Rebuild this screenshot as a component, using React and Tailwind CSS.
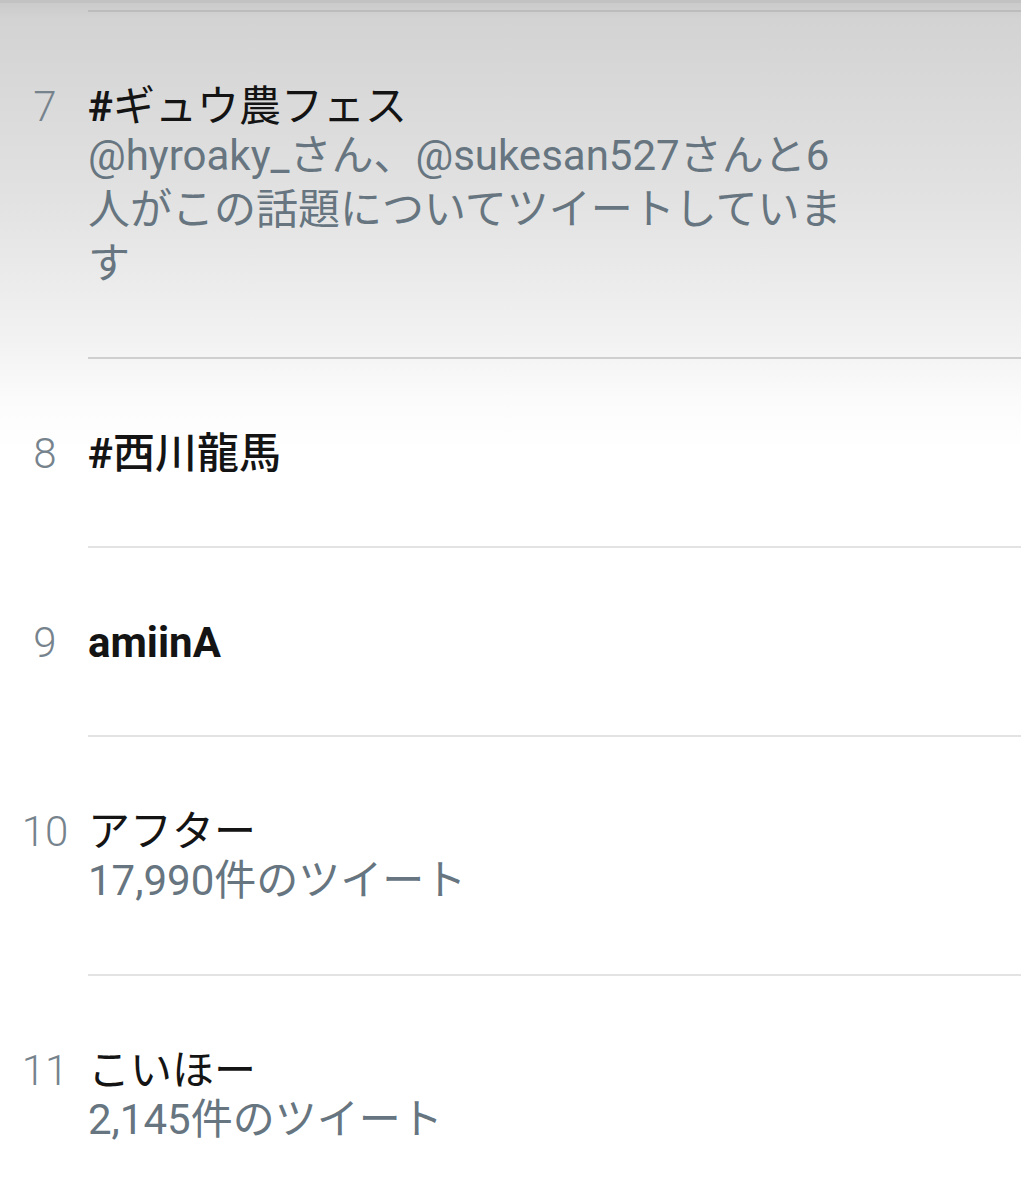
const items = [
  { n: 7, title: "#ギュウ農フェス", sub: "@hyroaky_さん、@sukesan527さんと6人がこの話題についてツイートしています", cjk: "font-normal" },
  { n: 8, title: "#西川龍馬", cjk: "font-medium" },
  { n: 9, title: "amiinA", cjk: "font-normal" },
  { n: 10, title: "アフター", sub: "17,990件のツイート", cjk: "font-normal" },
  { n: 11, title: "こいほー", sub: "2,145件のツイート", cjk: "font-normal" },
];

const font = { fontFamily: 'Roboto, "Noto Sans CJK JP", sans-serif' };

function Title({ text, cjk }) {
  const runs = text.match(/[\x00-\x7f]+|[^\x00-\x7f]+/g) || [];
  return runs.map((r, i) =>
    /^[\x00-\x7f]+$/.test(r) ? (
      <span key={i} className="font-bold">{r}</span>
    ) : (
      <span key={i} className={cjk}>{r}</span>
    )
  );
}

export default function App() {
  return (
    <div
      className="w-[1021px] h-[1200px] overflow-hidden bg-[linear-gradient(to_bottom,#c9c9c9_0px,#d3d3d3_20px,#e2e2e2_200px,#f2f2f2_340px,#fbfbfb_400px,#ffffff_450px)]"
      style={font}
    >
      <div className="h-[3px] bg-[#c2c2c2]" />
      <div className="flex">
        <div className="w-[88px] h-[7px]" />
        <div className="flex-1 h-[9px] border-b-2 border-[#bcbcbc]" />
      </div>
      {items.map((it, i) => (
        <div key={it.n} className="flex">
          <div className="w-[88px] pl-[4px] pr-[2px] text-center pt-[73px] text-[42px] leading-[44px] font-light text-[#76838d]">
            {it.n}
          </div>
          <div
            className={
              "flex-1 pt-[73px] pb-[66px] min-h-[189px] " +
              (i === 0 ? "border-b-2 border-[#cfcfcf]" : "border-b-2 border-[#e3e3e3]")
            }
          >
            <div className="w-[775px] text-[42px] leading-[44px] text-[#141414]">
              <Title text={it.title} cjk={it.cjk} />
            </div>
            {it.sub && (
              <div className="w-[775px] text-[42px] leading-[54px] text-[#66757f]">
                {it.sub}
              </div>
            )}
          </div>
        </div>
      ))}
    </div>
  );
}
